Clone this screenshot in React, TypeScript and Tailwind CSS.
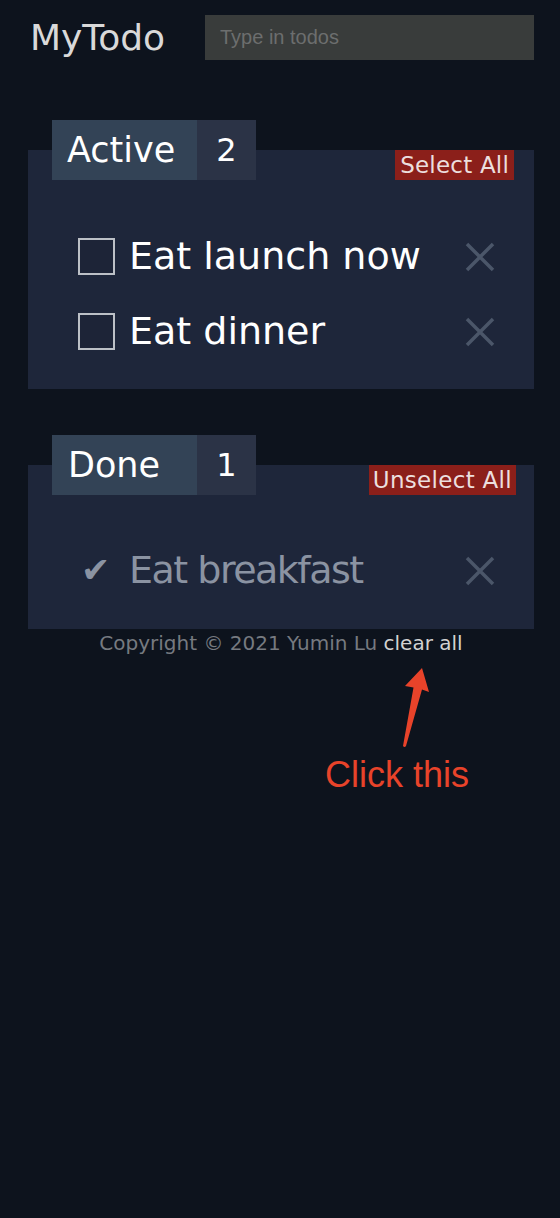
import { useState } from "react";

const font = { fontFamily: "'DejaVu Sans', 'Open Sans', sans-serif" };
const helvetica = { fontFamily: "'Liberation Sans', Arial, sans-serif" };

type Todo = { id: number; text: string; done: boolean };

function Cross() {
  return (
    <svg width="30" height="30" viewBox="0 0 30 30" className="shrink-0">
      <path d="M2 2 L28 28 M28 2 L2 28" stroke="#4b5669" strokeWidth="3.5" />
    </svg>
  );
}

export default function App() {
  const [todos] = useState<Todo[]>([
    { id: 1, text: "Eat launch now", done: false },
    { id: 2, text: "Eat dinner", done: false },
    { id: 3, text: "Eat breakfast", done: true },
  ]);
  const active = todos.filter((t) => !t.done);
  const done = todos.filter((t) => t.done);

  return (
    <div className="min-h-screen bg-[#0d131d] text-white" style={font}>
      <header className="flex items-center pt-[15px] pl-[30px] pr-[26px]">
        <h1 className="w-[175px] text-[36px] font-normal leading-[45px] text-[#d9d9d9]">
          MyTodo
        </h1>
        <input
          className="h-[45px] flex-1 bg-[#393c3b] px-[15px] text-[20px] text-white outline-none placeholder:text-[#6c6e6e]"
          style={helvetica}
          placeholder="Type in todos"
        />
      </header>

      <main className="pl-[28px] pr-[26px]">
        {/* Active */}
        <section className="mt-[90px] bg-[#1e263a] pb-[39px]">
          <div className="flex items-start justify-between">
            <div className="-mt-[30px] ml-[24px] flex h-[60px]">
              <div className="flex w-[145px] items-center bg-[#334356] pl-[15px] text-[35px]">
                Active
              </div>
              <div className="flex w-[59px] items-center justify-center bg-[#2b3346] text-[32px]">
                {active.length}
              </div>
            </div>
            <button className="mr-[20px] h-[30px] bg-[#8b1f1a] px-[5px] text-[23px] leading-[30px] text-[#ecdede] tracking-[0.2px]">
              Select All
            </button>
          </div>
          <ul className="mt-[58px] flex flex-col gap-[38px] pl-[50px] pr-[39px]">
            {active.map((t) => (
              <li key={t.id} className="flex h-[37px] items-center">
                <span className="h-[37px] w-[37px] shrink-0 border-2 border-[#bcc0c6] bg-[#1d2437]" />
                <span className="ml-[14px] flex-1 text-[38px] leading-[37px]">{t.text}</span>
                <Cross />
              </li>
            ))}
          </ul>
        </section>

        {/* Done */}
        <section className="mt-[76px] bg-[#1e263a] pb-[40px]">
          <div className="flex items-start justify-between">
            <div className="-mt-[30px] ml-[24px] flex h-[60px]">
              <div className="flex w-[145px] items-center bg-[#334356] pl-[16px] text-[35px]">
                Done
              </div>
              <div className="flex w-[59px] items-center justify-center bg-[#2b3346] text-[32px]">
                {done.length}
              </div>
            </div>
            <button className="mr-[18px] h-[30px] bg-[#8b1f1a] px-[4px] text-[23px] leading-[30px] text-[#ecdede] tracking-[0.3px]">
              Unselect All
            </button>
          </div>
          <ul className="mt-[57px] flex flex-col pl-[53px] pr-[39px]">
            {done.map((t) => (
              <li key={t.id} className="flex h-[37px] items-center text-[#8b93a2]">
                <span className="w-[48px] shrink-0 text-[35px] leading-[37px]">✔</span>
                <span className="flex-1 text-[38px] leading-[37px] tracking-[-1.5px]">{t.text}</span>
                <Cross />
              </li>
            ))}
          </ul>
        </section>

        <footer className="mt-0 text-center text-[20px] leading-[28px] text-[#767a80]">
          Copyright © 2021 Yumin Lu <button className="text-[#d2d2d2]">clear all</button>
        </footer>
      </main>

      {/* annotation */}
      <div className="ml-[325px] mt-[3px]" style={helvetica}>
        <svg width="50" height="95" viewBox="0 0 50 95" className="ml-[70px] block">
          <path d="M27 8 L34 32 L27 29.5 L11 86 Q9.5 88 8 86 L18.5 27.5 L10 26 Z" fill="#e8432a" />
        </svg>
        <div className="text-[36px] leading-[40px] text-[#e8432a]">Click this</div>
      </div>
    </div>
  );
}
